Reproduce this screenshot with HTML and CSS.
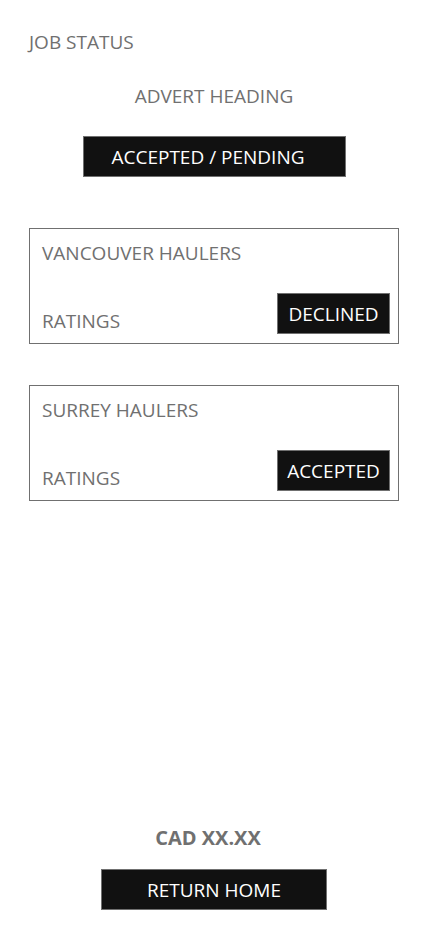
FILE: index.html
```html
<!DOCTYPE html>
<html lang="en">
<head>
    <meta charset="UTF-8">
    <meta name="viewport" content="width=device-width, initial-scale=1.0">
    <title>job status</title>
    <link rel="stylesheet" href="styles.css">
</head>
<body>
    <div id="page">
        <div class="title">JOB STATUS</div>
        <div class="heading">ADVERT HEADING</div>
        <div class="status_row">
            <button class="btn status_btn">ACCEPTED / PENDING</button>
        </div>

        <div class="card">
            <div class="name">VANCOUVER HAULERS</div>
            <div class="card_bottom">
                <div class="ratings">RATINGS</div>
                <button class="btn small_btn">DECLINED</button>
            </div>
        </div>

        <div class="card">
            <div class="name">SURREY HAULERS</div>
            <div class="card_bottom">
                <div class="ratings">RATINGS</div>
                <button class="btn small_btn">ACCEPTED</button>
            </div>
        </div>

        <div class="spacer"></div>

        <div class="price">CAD XX.XX</div>
        <div class="status_row">
            <button class="btn home_btn">RETURN HOME</button>
        </div>
    </div>
</body>
</html>
```

FILE: styles.css
```css
*{
    margin: 0;
    padding: 0;
    box-sizing: border-box;
}
body{
    background-color: white;
    color: #707070;
    font-family: "Open Sans", "Noto Sans", sans-serif;
    font-size: 19px;
}
#page{
    display: flex;
    flex-direction: column;
    height: 926px;
    padding: 0 29px;
}
.title{
    margin-top: 30px;
    line-height: 24px;
}
.heading{
    margin-top: 30px;
    line-height: 24px;
    text-align: center;
}
.status_row{
    display: flex;
    justify-content: center;
}
.btn{
    background-color: #111111;
    color: white;
    border: 1px solid #707070;
    font-family: inherit;
    font-size: 19px;
    height: 41px;
    cursor: pointer;
}
.status_btn{
    margin-top: 28px;
    width: 263px;
    padding-right: 12px;
}
.status_row + .card{
    margin-top: 51px;
}
.card{
    border: 1px solid #707070;
    height: 116px;
    padding: 12px 8px 9px 12px;
    display: flex;
    flex-direction: column;
    justify-content: space-between;
}
.card + .card{
    margin-top: 41px;
}
.name{
    line-height: 24px;
}
.card_bottom{
    display: flex;
    justify-content: space-between;
    align-items: flex-end;
}
.ratings{
    line-height: 24px;
    margin-bottom: 1px;
}
.small_btn{
    width: 113px;
}
.spacer{
    flex: 1;
}
.price{
    font-weight: bold;
    text-align: center;
    line-height: 24px;
    font-size: 20px;
    padding-right: 12px;
}
.home_btn{
    margin-top: 19px;
    margin-bottom: 16px;
    width: 226px;
}
```
